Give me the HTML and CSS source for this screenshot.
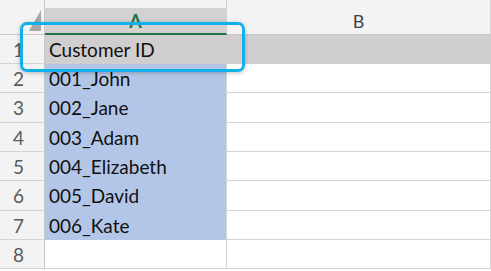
FILE: index.html
```html
<!DOCTYPE html>
<html lang="en">
<head>
  <meta charset="UTF-8">
  <meta name="viewport" content="width=device-width, initial-scale=1.0">
  <title>Customer ID</title>
  <link rel="stylesheet" href="styles.css">
</head>
<body>
  <div class="sheet">
    <div class="corner"><span class="tri"></span></div>
    <div class="colhead active">A</div>
    <div class="colhead">B</div>

    <div class="rowhead">1</div>
    <div class="cell picked">Customer ID</div>
    <div class="cell picked"></div>

    <div class="rowhead">2</div>
    <div class="cell blue">001_John</div>
    <div class="cell"></div>

    <div class="rowhead">3</div>
    <div class="cell blue">002_Jane</div>
    <div class="cell"></div>

    <div class="rowhead">4</div>
    <div class="cell blue">003_Adam</div>
    <div class="cell"></div>

    <div class="rowhead">5</div>
    <div class="cell blue">004_Elizabeth</div>
    <div class="cell"></div>

    <div class="rowhead">6</div>
    <div class="cell blue">005_David</div>
    <div class="cell"></div>

    <div class="rowhead">7</div>
    <div class="cell blue">006_Kate</div>
    <div class="cell"></div>

    <div class="rowhead">8</div>
    <div class="cell"></div>
    <div class="cell"></div>
  </div>
  <div class="callout"></div>
</body>
</html>
```

FILE: styles.css
```css
html, body {
  margin: 0;
  padding: 0;
  background: #fff;
  overflow: hidden;
}
body {
  font-family: Lato, "Liberation Sans", Arial, sans-serif;
  position: relative;
  width: 491px;
  height: 271px;
}
.sheet {
  display: grid;
  grid-template-columns: 45px 182px 264px;
  grid-template-rows: 35px 29px 29px 30px 29px 29px 30px 29px 29px;
}
.corner {
  background: #f3f3f3;
  border-right: 1px solid #c8c8c8;
  border-bottom: 1px solid #c8c8c8;
  box-sizing: border-box;
  position: relative;
}
.tri {
  position: absolute;
  right: 3px;
  bottom: 3px;
  width: 0;
  height: 0;
  border-left: 12px solid transparent;
  border-bottom: 21px solid #a8a8a8;
}
.colhead {
  background: #f3f3f3;
  color: #444;
  font-size: 18px;
  display: flex;
  align-items: center;
  justify-content: center;
  padding-top: 8px;
  box-sizing: border-box;
  border-bottom: 1px solid #c8c8c8;
  border-right: 1px solid #d4d4d4;
}
.colhead.active {
  background: linear-gradient(#f3f3f3 0 8px, #d2d2d2 8px);
  color: #217346;
  font-weight: bold;
  border-bottom: 2px solid #217346;
  border-right: 1px solid #d2d2d2;
}
.rowhead {
  background: #f3f3f3;
  color: #5a5a5a;
  font-size: 19px;
  display: flex;
  align-items: center;
  justify-content: center;
  padding-right: 7px;
  box-sizing: border-box;
  border-right: 1px solid #c8c8c8;
  border-bottom: 1px solid #d4d4d4;
}
.cell {
  font-size: 19px;
  color: #111;
  display: flex;
  align-items: center;
  padding-left: 4px;
  box-sizing: border-box;
  border-right: 1px solid #d4d4d4;
  border-bottom: 1px solid #d4d4d4;
  white-space: nowrap;
}
.picked {
  background: #d0cece;
  border-bottom-color: #d0cece;
  border-right-color: #d0cece;
}
.blue {
  background: #b4c6e7;
  border-bottom-color: #b4c6e7;
  border-right-color: #d4d4d4;
}
.callout {
  position: absolute;
  left: 20px;
  top: 22px;
  width: 225px;
  height: 50px;
  box-sizing: border-box;
  border: 3px solid #13b0ea;
  border-radius: 7px;
  box-shadow: 0 1px 4px rgba(0, 0, 0, 0.25);
}
```
